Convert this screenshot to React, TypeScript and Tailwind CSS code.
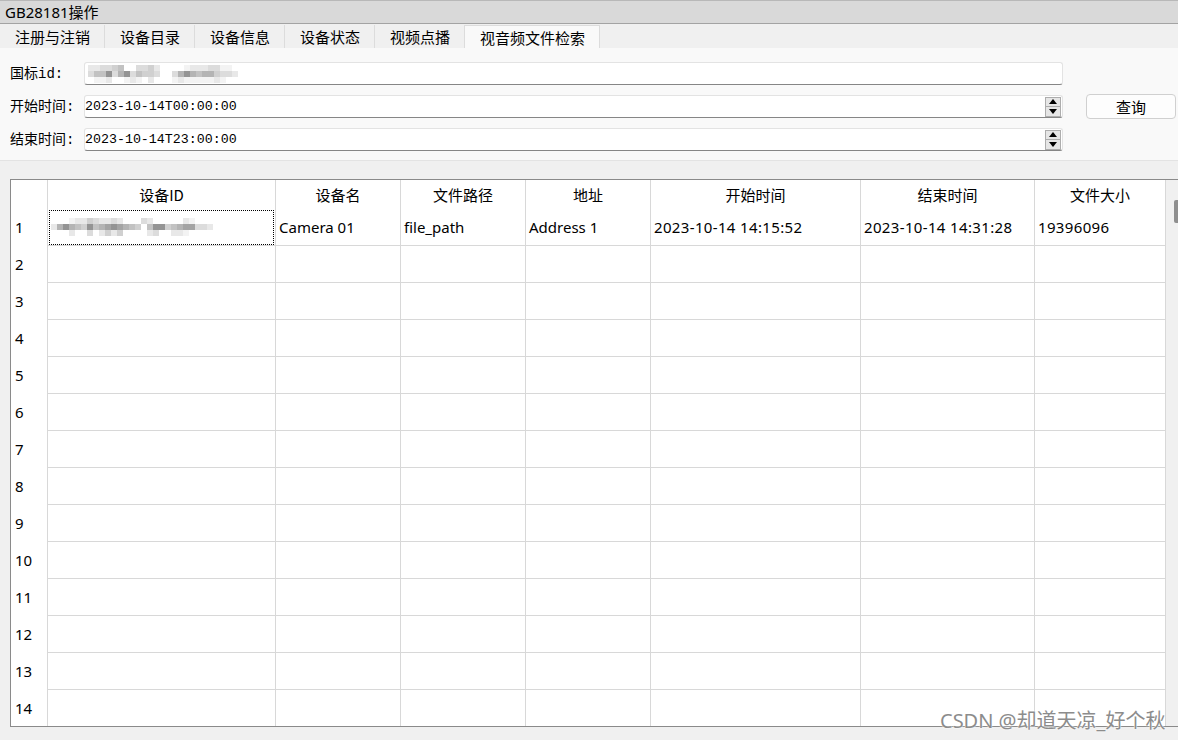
import React from "react";

const SHADES = ["#ffffff", "#f3f3f3", "#e8e8e8", "#dcdcdc", "#d0d0d0", "#c2c2c2", "#b4b4b4", "#a4a4a4", "#949494", "#848484"];

function Mosaic({ rows, size = 6 }: { rows: string[]; size?: number }) {
  const w = rows[0].length * size;
  const h = rows.length * size;
  return (
    <svg width={w} height={h} className="block">
      {rows.flatMap((r, y) =>
        r.split("").map((c, x) =>
          c === "0" ? null : (
            <rect key={`${x}-${y}`} x={x * size} y={y * size} width={size} height={size} fill={SHADES[+c]} />
          )
        )
      )}
    </svg>
  );
}

const SANS = "font-['Noto_Sans','Noto_Sans_CJK_SC',sans-serif]";
const CJK = "font-['Noto_Sans_CJK_SC','Noto_Sans',sans-serif]";
const MONO = "font-['Liberation_Mono','Noto_Sans_CJK_SC',monospace]";

const TABS = ["注册与注销", "设备目录", "设备信息", "设备状态", "视频点播", "视音频文件检索"];
const HEAD = ["设备ID", "设备名", "文件路径", "地址", "开始时间", "结束时间", "文件大小"];
const ROW1 = ["", "Camera 01", "file_path", "Address 1", "2023-10-14 14:15:52", "2023-10-14 14:31:28", "19396096"];

function Spin() {
  return (
    <div className="ml-auto mr-[1px] flex h-[20px] w-[16px] flex-col">
      <div className="flex h-[10px] items-center justify-center border border-[#adadad] bg-[#e6e6e6]">
        <svg width="8" height="5" viewBox="0 0 8 5">
          <polygon points="4,0 8,5 0,5" fill="#000" />
        </svg>
      </div>
      <div className="flex h-[10px] items-center justify-center border border-t-0 border-[#adadad] bg-[#e6e6e6]">
        <svg width="8" height="5" viewBox="0 0 8 5">
          <polygon points="0,0 8,0 4,5" fill="#000" />
        </svg>
      </div>
    </div>
  );
}

function Field({ children, spin }: { children?: React.ReactNode; spin?: boolean }) {
  return (
    <div className="flex h-[23px] items-center rounded-[3px] border border-[#e3e3e3] border-b-[#868686] bg-white">
      {children}
      {spin && <Spin />}
    </div>
  );
}

function Label({ children }: { children: React.ReactNode }) {
  return <div className={`${MONO} flex h-[23px] items-center text-[14px] leading-none text-black`}>{children}</div>;
}

const COLW = ["w-[37px]", "w-[228px]", "w-[125px]", "w-[125px]", "w-[125px]", "w-[210px]", "w-[174px]", "w-[131px]"];

export default function App() {
  return (
    <div className={`${SANS} relative flex h-[740px] w-[1178px] flex-col overflow-hidden bg-[#f0f0f0] text-black`}>
      {/* title bar */}
      <div className="flex h-[24px] shrink-0 items-center border-t border-b border-t-[#b8b8b8] border-b-[#a3a3a3] bg-[#d9d9d9] pl-[5px] text-[15px] leading-none">
        GB28181操作
      </div>

      {/* tabs */}
      <div className="flex h-[24px] shrink-0 items-end bg-[#f0f0f0]">
        {TABS.map((t, i) => (
          <div
            key={t}
            className={`${CJK} flex h-[23px] items-center border-r border-[#dcdcdc] pl-[15px] pr-[14px] text-[15px] leading-none ${
              i === TABS.length - 1 ? "border-t bg-[#f9f9f9]" : ""
            }`}
          >
            {t}
          </div>
        ))}
      </div>

      {/* form */}
      <div className="h-[113px] shrink-0 border-b border-[#e3e3e3] bg-[#f9f9f9] pl-[10px] pt-[14px]">
        <div className="grid grid-cols-[74px_979px_113px] grid-rows-[23px_23px_23px] gap-y-[10px]">
          <Label>国标id:</Label>
          <Field>
            <div className="ml-[3px]">
              <Mosaic
                size={6}
                rows={[
                  "22334500334200001222331100",
                  "35583683544300368656643320",
                  "01120012102000121111121000",
                ]}
              />
            </div>
          </Field>
          <div />

          <Label>开始时间:</Label>
          <Field spin>
            <span className={`${MONO} text-[13.3px] leading-none`}>2023-10-14T00:00:00</span>
          </Field>
          <button
            className={`${CJK} ml-[23px] h-[25px] w-[90px] self-center rounded-[4px] border border-[#d0d0d0] bg-[#fdfdfd] text-[15px] leading-none`}
          >
            查询
          </button>

          <Label>结束时间:</Label>
          <Field spin>
            <span className={`${MONO} text-[13.3px] leading-none`}>2023-10-14T23:00:00</span>
          </Field>
          <div />
        </div>
      </div>

      {/* table area */}
      <div className="flex-1 pl-[10px] pt-[18px]">
        <div className="flex h-[548px] overflow-hidden border-t border-b border-l border-[#8a8a8a] bg-white">
          <div className="flex w-[1156px] flex-col">
            {/* header */}
            <div className="flex h-[29px] shrink-0">
              <div className={`${COLW[0]} h-full border-r border-[#d8d8d8]`} />
              {HEAD.map((h, i) => (
                <div
                  key={h}
                  className={`${COLW[i + 1]} ${CJK} flex h-full items-center justify-center border-r border-[#d8d8d8] text-[15px] leading-none`}
                >
                  {h}
                </div>
              ))}
            </div>
            {/* rows */}
            {Array.from({ length: 14 }, (_, r) => (
              <div key={r} className="flex h-[37px] shrink-0">
                <div className={`${COLW[0]} flex h-full items-center border-r border-[#d8d8d8] pl-[4px] text-[15px] leading-none`}>
                  {r + 1}
                </div>
                {HEAD.map((h, c) => (
                  <div
                    key={h}
                    className={`${COLW[c + 1]} flex h-full items-center border-r border-b border-[#d8d8d8] text-[15px] leading-none`}
                  >
                    {r === 0 && c === 0 ? (
                      <div className="m-[1px] flex h-[35px] w-full items-center border border-dotted border-black pl-[1px]">
                        <Mosaic
                          size={6}
                          rows={[
                            "0001224322320003200000210000",
                            "2686548567876540588456773320",
                            "0002003024240000230022100000",
                          ]}
                        />
                      </div>
                    ) : r === 0 ? (
                      <span className={`pl-[3px] whitespace-nowrap ${c >= 4 ? "tracking-[0.35px]" : ""}`}>{ROW1[c]}</span>
                    ) : null}
                  </div>
                ))}
              </div>
            ))}
          </div>
          {/* scrollbar */}
          <div className="relative w-[12px] bg-[#f0f0f0]">
            <div className="absolute right-0 top-[20px] h-[23px] w-[4px] rounded-l-[2px] bg-[#8f8f8f]" />
          </div>
        </div>
      </div>

      {/* watermark */}
      <div
        className={`${SANS} pointer-events-none absolute left-[940px] top-[711px] whitespace-nowrap text-[20px] leading-none text-[#8c8c8c] [text-shadow:0_0_2px_#ffffff,0_0_1px_#ffffff]`}
      >
        CSDN @却道天凉_好个秋
      </div>
    </div>
  );
}
